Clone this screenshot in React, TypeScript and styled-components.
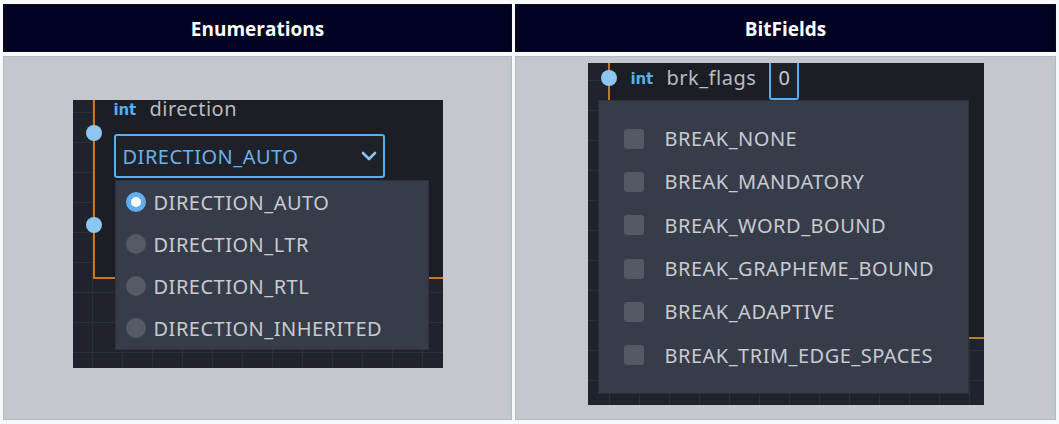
import React from "react";
import styled, { createGlobalStyle } from "styled-components";

const GlobalStyle = createGlobalStyle`
  html, body { margin: 0; padding: 0; background: #f8f9fa; }
  body { font-family: "Noto Sans", "Open Sans", sans-serif; }
`;

const Table = styled.div`
  display: grid;
  grid-template-columns: 509px 541px;
  grid-template-rows: 48px 364px;
  column-gap: 3px;
  row-gap: 4px;
  padding: 4px 0 0 3px;
  width: 1059px;
  height: 424px;
  box-sizing: border-box;
`;

const HeadCell = styled.div`
  background: #020322;
  border: 1px solid #0b0b12;
  color: #ffffff;
  font-family: "Open Sans", "Noto Sans", sans-serif;
  font-weight: 700;
  font-size: 19px;
  display: flex;
  align-items: center;
  justify-content: center;
  padding-top: 2px;
  box-sizing: border-box;
`;

const BodyCell = styled.div`
  background: #c4c7ce;
  border: 1px solid #b4b8bf;
  display: flex;
  align-items: center;
  justify-content: center;
  padding-bottom: 8px;
  box-sizing: border-box;
`;

const Canvas = styled.div<{ $w: number; $h: number; $gx: number; $gy: number }>`
  position: relative;
  overflow: hidden;
  width: ${(p) => p.$w}px;
  height: ${(p) => p.$h}px;
  background-color: #20232b;
  background-image: linear-gradient(#2b2f37 1px, transparent 1px),
    linear-gradient(90deg, #2b2f37 1px, transparent 1px);
  background-size: 30px 30px;
  background-position: ${(p) => p.$gx}px ${(p) => p.$gy}px;
  font-family: "Noto Sans", sans-serif;
`;

const NodeBody = styled.div<{ $bottom: number }>`
  position: absolute;
  left: 20px;
  right: -10px;
  top: -10px;
  height: ${(p) => p.$bottom + 10}px;
  background: #1b1e25;
  border-left: 2px solid #c27a1d;
  border-bottom: 2px solid #c27a1d;
  box-sizing: border-box;
`;

const Port = styled.div<{ $x: number; $y: number }>`
  position: absolute;
  left: ${(p) => p.$x - 8}px;
  top: ${(p) => p.$y - 8}px;
  width: 16px;
  height: 16px;
  border-radius: 50%;
  background: #8ec6f2;
`;

const PropRow = styled.div<{ $x: number; $y: number; $h: number }>`
  position: absolute;
  left: ${(p) => p.$x}px;
  top: ${(p) => p.$y}px;
  height: ${(p) => p.$h}px;
  display: flex;
  align-items: center;
`;

const TypeTag = styled.span`
  font-family: "DejaVu Sans", sans-serif;
  font-weight: 700;
  font-size: 15px;
  line-height: 18px;
  letter-spacing: -0.2px;
  color: #56b0ee;
  width: 36px;
  padding-top: 1px;
`;

const PropName = styled.span`
  font-size: 20px;
  line-height: 18px;
  letter-spacing: 0.5px;
  color: #b9bcc1;
`;

const ValueBox = styled.div`
  align-self: flex-start;
  margin-left: 13px;
  height: 37px;
  width: 30px;
  box-sizing: border-box;
  border: 2px solid #5aaef0;
  border-top: none;
  border-radius: 0 0 3px 3px;
  background: #1e2128;
  color: #c9cbcf;
  font-size: 20px;
  line-height: 30px;
  text-align: center;
`;

const Dropdown = styled.div`
  position: absolute;
  left: 41px;
  top: 34px;
  width: 271px;
  height: 44px;
  box-sizing: border-box;
  border: 2px solid #5aaef0;
  border-radius: 3px;
  background: #1e2128;
  display: flex;
  align-items: center;
  justify-content: space-between;
  padding: 0 6px 0 7px;
  color: #69b1ec;
  font-size: 20px;
  letter-spacing: 0.5px;
`;

const Popup = styled.div<{ $x: number; $y: number; $w: number; $pad: number }>`
  position: absolute;
  left: ${(p) => p.$x}px;
  top: ${(p) => p.$y}px;
  width: ${(p) => p.$w}px;
  box-sizing: border-box;
  background: #363c49;
  border: 1px solid #2c313b;
  padding: ${(p) => p.$pad}px 0;
  display: flex;
  flex-direction: column;
`;

const Item = styled.div<{ $h: number; $indent: number; $gap: number }>`
  height: ${(p) => p.$h}px;
  display: flex;
  align-items: center;
  padding-left: ${(p) => p.$indent}px;
  gap: ${(p) => p.$gap}px;
  color: #c9cbcf;
  font-size: 20px;
  letter-spacing: 0.5px;
`;

const Radio = styled.span<{ $on?: boolean }>`
  width: 20px;
  height: 20px;
  border-radius: 50%;
  box-sizing: border-box;
  background: ${(p) => (p.$on ? "#ffffff" : "#555b66")};
  border: ${(p) => (p.$on ? "5px solid #62aeee" : "none")};
  flex-shrink: 0;
`;

const Check = styled.span`
  width: 20px;
  height: 20px;
  border-radius: 3px;
  background: #535965;
  flex-shrink: 0;
`;

const Chevron = () => (
  <svg width="16" height="10" viewBox="0 0 16 10">
    <path d="M2 2 L8 8 L14 2" fill="none" stroke="#8cc2ef" strokeWidth="2.6" strokeLinecap="round" strokeLinejoin="round" />
  </svg>
);

const enumItems = ["DIRECTION_AUTO", "DIRECTION_LTR", "DIRECTION_RTL", "DIRECTION_INHERITED"];
const flagItems = [
  "BREAK_NONE",
  "BREAK_MANDATORY",
  "BREAK_WORD_BOUND",
  "BREAK_GRAPHEME_BOUND",
  "BREAK_ADAPTIVE",
  "BREAK_TRIM_EDGE_SPACES",
];

export default function App() {
  return (
    <>
      <GlobalStyle />
      <Table>
        <HeadCell>Enumerations</HeadCell>
        <HeadCell>BitFields</HeadCell>
        <BodyCell>
          <Canvas $w={370} $h={268} $gx={19} $gy={12}>
            <NodeBody $bottom={179} />
            <Port $x={21} $y={33} />
            <Port $x={21} $y={125} />
            <PropRow $x={41} $y={0} $h={18}>
              <TypeTag>int</TypeTag>
              <PropName>direction</PropName>
            </PropRow>
            <Dropdown>
              <span>DIRECTION_AUTO</span>
              <Chevron />
            </Dropdown>
            <Popup $x={42} $y={80} $w={314} $pad={0}>
              {enumItems.map((t, i) => (
                <Item key={t} $h={42} $indent={10} $gap={8}>
                  <Radio $on={i === 0} />
                  <span>{t}</span>
                </Item>
              ))}
            </Popup>
          </Canvas>
        </BodyCell>
        <BodyCell>
          <Canvas $w={396} $h={342} $gx={21} $gy={17}>
            <NodeBody $bottom={276} />
            <Port $x={21} $y={15} />
            <PropRow $x={43} $y={0} $h={30}>
              <TypeTag>int</TypeTag>
              <PropName>brk_flags</PropName>
              <ValueBox>0</ValueBox>
            </PropRow>
            <Popup $x={10} $y={37} $w={371} $pad={16}>
              {flagItems.map((t) => (
                <Item key={t} $h={43.3} $indent={25} $gap={21}>
                  <Check />
                  <span>{t}</span>
                </Item>
              ))}
            </Popup>
          </Canvas>
        </BodyCell>
      </Table>
    </>
  );
}
